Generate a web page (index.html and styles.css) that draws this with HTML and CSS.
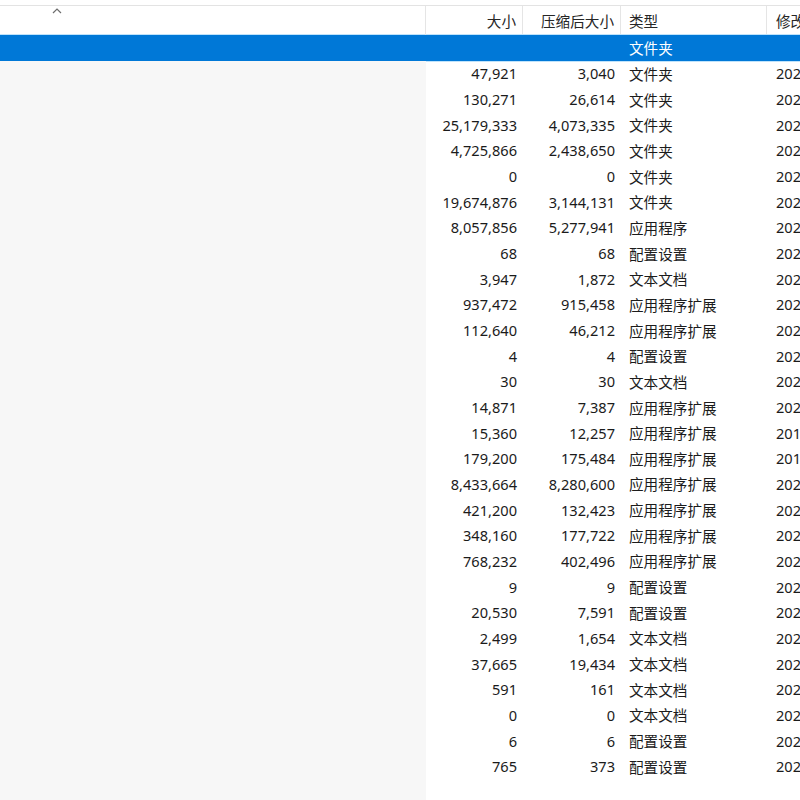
FILE: index.html
```html
<!DOCTYPE html>
<html>
<head>
<meta charset="UTF-8">
<link rel="stylesheet" href="styles.css">
</head>
<body>
<div class="list">
    <div class="topgap"></div>
    <div class="head">
        <div class="hcell name">
            <svg class="sort" width="10" height="6" viewBox="0 0 10 6"><polyline points="1,5 5,1 9,5" fill="none" stroke="#6d6d6d" stroke-width="1.2"/></svg>
        </div>
        <div class="hcell num">大小</div>
        <div class="hcell num">压缩后大小</div>
        <div class="hcell">类型</div>
        <div class="hcell last">修改日期</div>
    </div>
    <div class="row sel">
        <div class="cell name"></div>
        <div class="cell num"></div>
        <div class="cell num"></div>
        <div class="cell">文件夹</div>
        <div class="cell"></div>
    </div>
    <div class="row"><div class="cell name"></div><div class="cell num">47,921</div><div class="cell num">3,040</div><div class="cell">文件夹</div><div class="cell">2021/5/12 9:41</div></div>
    <div class="row"><div class="cell name"></div><div class="cell num">130,271</div><div class="cell num">26,614</div><div class="cell">文件夹</div><div class="cell">2021/5/12 9:41</div></div>
    <div class="row"><div class="cell name"></div><div class="cell num">25,179,333</div><div class="cell num">4,073,335</div><div class="cell">文件夹</div><div class="cell">2021/5/12 9:41</div></div>
    <div class="row"><div class="cell name"></div><div class="cell num">4,725,866</div><div class="cell num">2,438,650</div><div class="cell">文件夹</div><div class="cell">2021/5/12 9:41</div></div>
    <div class="row"><div class="cell name"></div><div class="cell num">0</div><div class="cell num">0</div><div class="cell">文件夹</div><div class="cell">2021/5/12 9:41</div></div>
    <div class="row"><div class="cell name"></div><div class="cell num">19,674,876</div><div class="cell num">3,144,131</div><div class="cell">文件夹</div><div class="cell">2021/5/12 9:41</div></div>
    <div class="row"><div class="cell name"></div><div class="cell num">8,057,856</div><div class="cell num">5,277,941</div><div class="cell">应用程序</div><div class="cell">2021/5/12 9:41</div></div>
    <div class="row"><div class="cell name"></div><div class="cell num">68</div><div class="cell num">68</div><div class="cell">配置设置</div><div class="cell">2021/5/12 9:41</div></div>
    <div class="row"><div class="cell name"></div><div class="cell num">3,947</div><div class="cell num">1,872</div><div class="cell">文本文档</div><div class="cell">2021/5/12 9:41</div></div>
    <div class="row"><div class="cell name"></div><div class="cell num">937,472</div><div class="cell num">915,458</div><div class="cell">应用程序扩展</div><div class="cell">2021/5/12 9:41</div></div>
    <div class="row"><div class="cell name"></div><div class="cell num">112,640</div><div class="cell num">46,212</div><div class="cell">应用程序扩展</div><div class="cell">2021/5/12 9:41</div></div>
    <div class="row"><div class="cell name"></div><div class="cell num">4</div><div class="cell num">4</div><div class="cell">配置设置</div><div class="cell">2021/5/12 9:41</div></div>
    <div class="row"><div class="cell name"></div><div class="cell num">30</div><div class="cell num">30</div><div class="cell">文本文档</div><div class="cell">2021/5/12 9:41</div></div>
    <div class="row"><div class="cell name"></div><div class="cell num">14,871</div><div class="cell num">7,387</div><div class="cell">应用程序扩展</div><div class="cell">2021/5/12 9:41</div></div>
    <div class="row"><div class="cell name"></div><div class="cell num">15,360</div><div class="cell num">12,257</div><div class="cell">应用程序扩展</div><div class="cell">2019/3/19 4:43</div></div>
    <div class="row"><div class="cell name"></div><div class="cell num">179,200</div><div class="cell num">175,484</div><div class="cell">应用程序扩展</div><div class="cell">2019/3/19 4:43</div></div>
    <div class="row"><div class="cell name"></div><div class="cell num">8,433,664</div><div class="cell num">8,280,600</div><div class="cell">应用程序扩展</div><div class="cell">2021/5/12 9:41</div></div>
    <div class="row"><div class="cell name"></div><div class="cell num">421,200</div><div class="cell num">132,423</div><div class="cell">应用程序扩展</div><div class="cell">2021/5/12 9:41</div></div>
    <div class="row"><div class="cell name"></div><div class="cell num">348,160</div><div class="cell num">177,722</div><div class="cell">应用程序扩展</div><div class="cell">2021/5/12 9:41</div></div>
    <div class="row"><div class="cell name"></div><div class="cell num">768,232</div><div class="cell num">402,496</div><div class="cell">应用程序扩展</div><div class="cell">2021/5/12 9:41</div></div>
    <div class="row"><div class="cell name"></div><div class="cell num">9</div><div class="cell num">9</div><div class="cell">配置设置</div><div class="cell">2021/5/12 9:41</div></div>
    <div class="row"><div class="cell name"></div><div class="cell num">20,530</div><div class="cell num">7,591</div><div class="cell">配置设置</div><div class="cell">2021/5/12 9:41</div></div>
    <div class="row"><div class="cell name"></div><div class="cell num">2,499</div><div class="cell num">1,654</div><div class="cell">文本文档</div><div class="cell">2021/5/12 9:41</div></div>
    <div class="row"><div class="cell name"></div><div class="cell num">37,665</div><div class="cell num">19,434</div><div class="cell">文本文档</div><div class="cell">2021/5/12 9:41</div></div>
    <div class="row"><div class="cell name"></div><div class="cell num">591</div><div class="cell num">161</div><div class="cell">文本文档</div><div class="cell">2021/5/12 9:41</div></div>
    <div class="row"><div class="cell name"></div><div class="cell num">0</div><div class="cell num">0</div><div class="cell">文本文档</div><div class="cell">2021/5/12 9:41</div></div>
    <div class="row"><div class="cell name"></div><div class="cell num">6</div><div class="cell num">6</div><div class="cell">配置设置</div><div class="cell">2021/5/12 9:41</div></div>
    <div class="row"><div class="cell name"></div><div class="cell num">765</div><div class="cell num">373</div><div class="cell">配置设置</div><div class="cell">2021/5/12 9:41</div></div>
    <div class="row fill"><div class="cell name"></div><div class="cell num"></div><div class="cell num"></div><div class="cell"></div><div class="cell"></div></div>
</div>
</body>
</html>
```

FILE: styles.css
```css
html, body {
    margin: 0;
    padding: 0;
    background: #ffffff;
    overflow: hidden;
}
body {
    width: 800px;
    height: 800px;
    font-family: "Noto Sans", "Noto Sans CJK SC", sans-serif;
    font-size: 14.6px;
    color: #1b1b1b;
}
.list {
    display: flex;
    flex-direction: column;
    height: 800px;
    width: 960px;
}
.topgap {
    height: 5px;
    border-bottom: 1px solid #e3e3e3;
}
.head,
.row {
    display: grid;
    grid-template-columns: 426px 97px 98px 146px 1fr;
}
.head {
    height: 29px;
}
.hcell {
    display: flex;
    align-items: center;
    padding: 0 8px;
    border-right: 1px solid #e5e5e5;
    white-space: nowrap;
    color: #262626;
}
.hcell.name {
    position: relative;
}
.hcell.num {
    justify-content: flex-end;
    padding-right: 6px;
}
.hcell.last {
    border-right: none;
    padding-left: 9px;
}
.sort {
    position: absolute;
    left: 52px;
    top: 2px;
}
.row {
    height: 25.67px;
    flex: none;
}
.cell {
    display: flex;
    align-items: center;
    padding: 0 8px;
    white-space: nowrap;
    overflow: hidden;
}
.cell.name {
    background: #f7f7f7;
}
.cell.num {
    justify-content: flex-end;
    padding-right: 6px;
}
.cell:last-child {
    padding-left: 9px;
}
.row.sel {
    background: #0078d7;
    color: #ffffff;
    box-shadow: 0 -1px 0 #bfe3fb, 0 1px 0 #bfe3fb;
}
.row.sel .cell.name {
    background: transparent;
}
.row.fill {
    flex: 1;
    height: auto;
}
```
